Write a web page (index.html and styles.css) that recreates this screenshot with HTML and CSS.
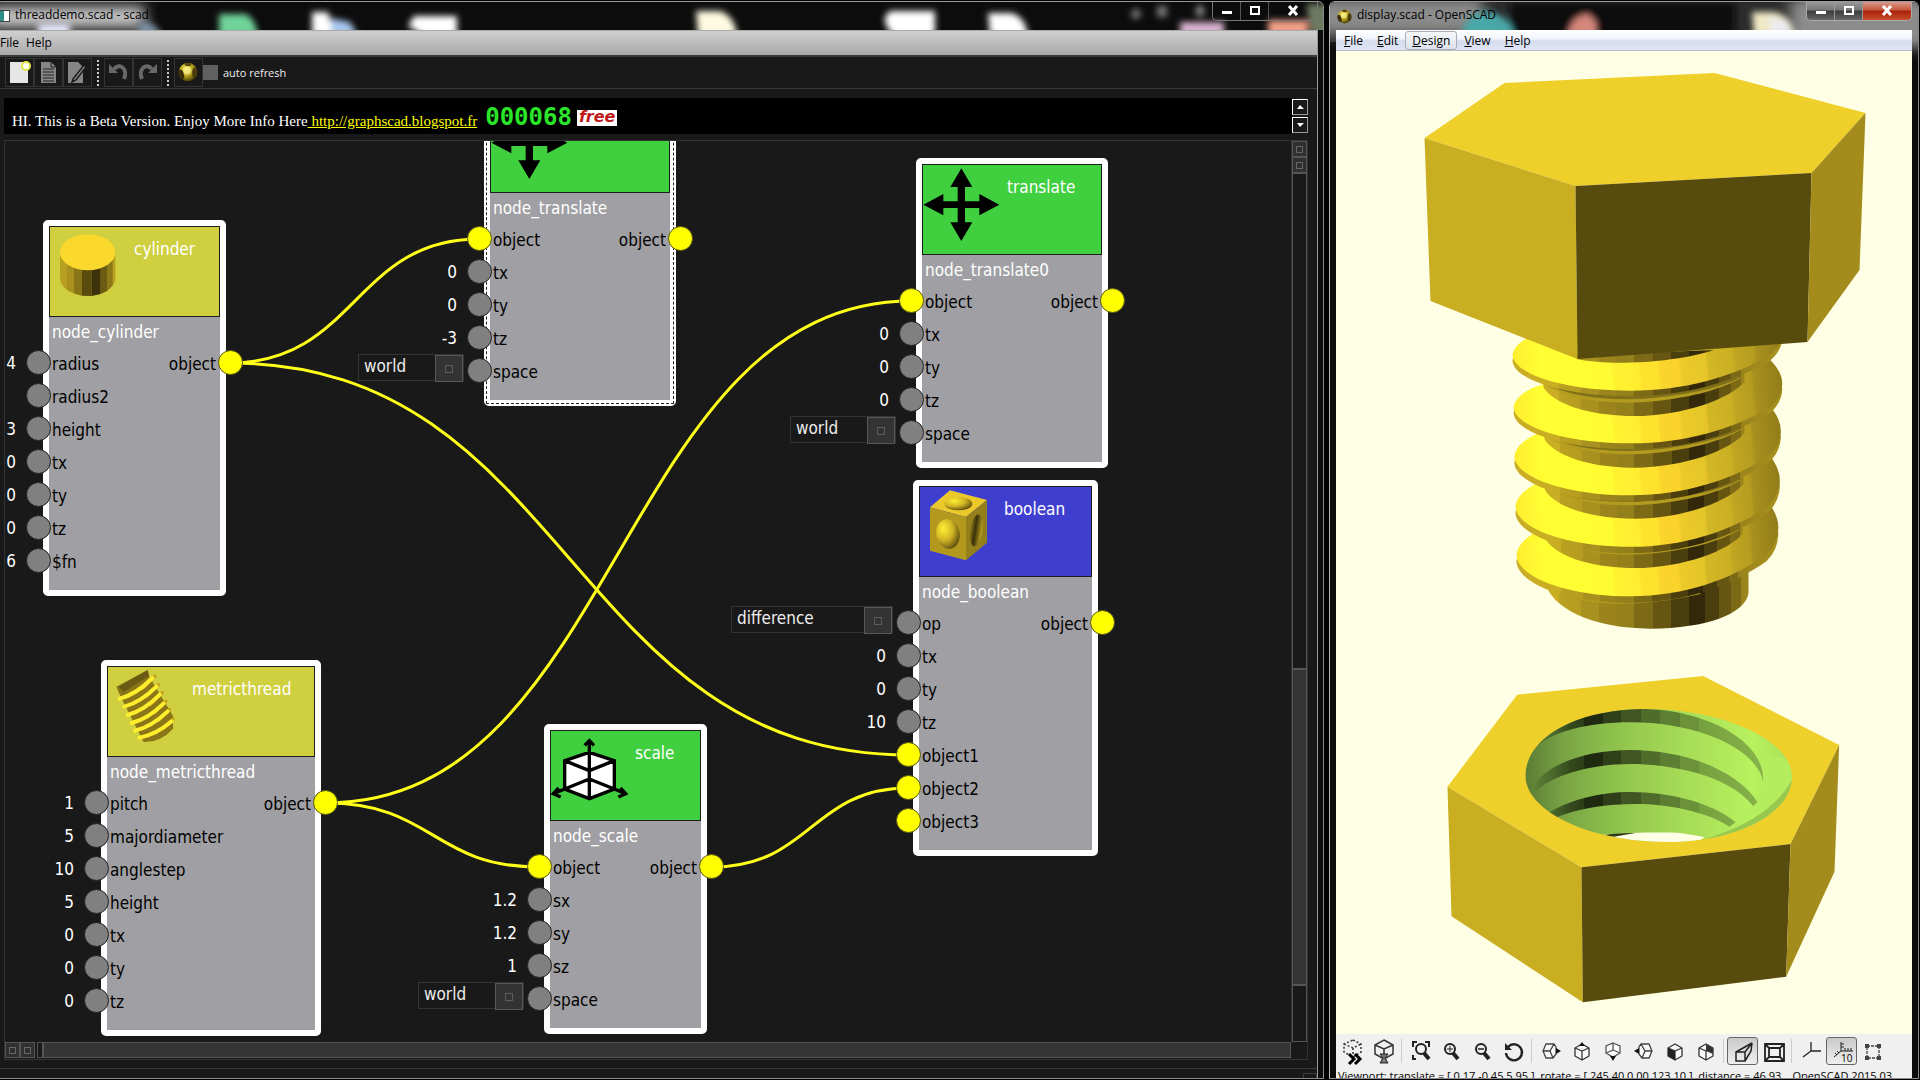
FILE: index.html
```html
<!DOCTYPE html>
<html lang="en">
<head>
<meta charset="utf-8">
<title>threaddemo.scad - scad</title>
<link rel="stylesheet" href="styles.css">
</head>
<body>
<svg class="defs" width="0" height="0" aria-hidden="true">
  <defs>
    <filter id="soft" x="-50%" y="-50%" width="200%" height="200%"><feGaussianBlur stdDeviation="3"/></filter>
    <filter id="glow" x="-50%" y="-100%" width="200%" height="300%"><feGaussianBlur stdDeviation="7"/></filter>
    <radialGradient id="gold" cx=".4" cy=".35" r=".7"><stop offset="0" stop-color="#f4e86a"/><stop offset=".5" stop-color="#b9a51f"/><stop offset="1" stop-color="#3a3206"/></radialGradient>
    <symbol id="logo" viewBox="0 0 24 24">
      <circle cx="12" cy="12" r="11" fill="url(#gold)"/>
      <ellipse cx="4" cy="15" rx="3" ry="6" fill="#3b2f0a" transform="rotate(-15 4 15)"/>
      <ellipse cx="20" cy="13" rx="3" ry="6" fill="#4a3c0c"/>
      <ellipse cx="12" cy="3" rx="4" ry="2" fill="#574710"/>
      <ellipse cx="11" cy="10" rx="5" ry="5" fill="#fff59a" opacity=".6"/>
    </symbol>
    <symbol id="cross-arrows" viewBox="0 0 240 240">
      <path d="M118 13L151 69H129V112H172V90L232 122L172 154V132H129V175H151L118 231L85 175H107V132H64V154L4 122L64 90V112H107V69H85Z" fill="#000"/>
    </symbol>
    <symbol id="cube" viewBox="0 0 28 28">
      <path d="M14 6L21 10V18L14 22L7 18V10ZM7 10L14 13L21 10M14 13V22" fill="#fafafa" stroke="#333" stroke-width="1.3" stroke-linejoin="round"/>
    </symbol>
  </defs>
</svg>

<div class="desktop">
  <section class="window graph" aria-label="threaddemo.scad - scad">
    <header class="titlebar">
      <svg class="glass" aria-hidden="true">
        <g filter="url(#glow)"><rect x="-10" y="4" width="155" height="22" fill="#c9c9c9"/></g>
        <g filter="url(#soft)">
          <path d="M38 22H70V34H38Z" fill="#e8e8ff"/><path d="M140 20Q155 18 162 34H135Z" fill="#7b8fa3"/>
          <path d="M219 12H246Q256 18 258 34H219Z" fill="#6fd39a"/>
          <path d="M312 10H328L334 34H312Z" fill="#fff"/><path d="M330 16L350 20L358 34H332Z" fill="#a9c6ee"/>
          <path d="M414 14H457V34H424L408 24Z" fill="#fff"/>
          <path d="M696 9H720Q735 14 737 34H698Z" fill="#fffbe2"/>
          <path d="M890 9H935V34H894Q878 18 890 9Z" fill="#fff"/>
          <path d="M988 11H1012Q1026 16 1028 34H990Z" fill="#fff"/>
          <circle cx="1136" cy="12" r="5" fill="#777"/><rect x="1157" y="4" width="10" height="11" fill="#777"/><rect x="1196" y="4" width="8" height="10" fill="#888"/>
          <path d="M1180 20H1224V34H1180Z" fill="#d9b3cf"/>
          <path d="M1268 18H1308V34H1268Z" fill="#ef9d86"/>
          <path d="M1306 2H1330V36H1312Z" fill="#6d7a60"/>
        </g>
      </svg>
      <span class="app-mark" aria-hidden="true"></span>
      <h1>threaddemo.scad - scad</h1>
      <div class="caption dark">
        <button class="cap" aria-label="Minimize"><svg viewBox="0 0 12 12"><rect x="1" y="6" width="10" height="3" fill="#fff"/></svg></button>
        <button class="cap" aria-label="Maximize"><svg viewBox="0 0 12 12"><rect x="2" y="2" width="8" height="7" fill="none" stroke="#fff" stroke-width="2"/></svg></button>
        <button class="cap close" aria-label="Close"><svg viewBox="0 0 12 12"><path d="M2 1L10 10M10 1L2 10" stroke="#fff" stroke-width="3"/></svg></button>
      </div>
    </header>

    <div class="graph-body">
      <nav class="menubar silver"><a href="#file">File</a><a href="#help">Help</a></nav>
      <div class="tools">
        <button class="tool" aria-label="New"><svg viewBox="0 0 27 27"><path d="M4 3H18L22 7V24H4Z" fill="#e6e6e6"/><circle cx="20" cy="7" r="4" fill="#fff" stroke="#e6e34a" stroke-width="2"/></svg></button>
        <button class="tool" aria-label="Open"><svg viewBox="0 0 27 27"><path d="M6 3H16L21 8V24H6Z" fill="#858585"/><path d="M8 10H19M8 13H19M8 16H19M8 19H19M8 22H19" stroke="#222" stroke-width="1"/><path d="M16 3V8H21" fill="none" stroke="#222"/></svg></button>
        <button class="tool" aria-label="Save"><svg viewBox="0 0 27 27"><path d="M4 3H14L19 8V24H4Z" fill="#858585"/><path d="M9 20L20 6L22 8L12 21L8 23Z" fill="#858585" stroke="#191919" stroke-width="1.4"/></svg></button>
        <span class="grip"></span>
        <button class="tool" aria-label="Undo"><svg viewBox="0 0 27 27"><path d="M9 10C15 3 23 10 19 20" fill="none" stroke="#686868" stroke-width="4"/><path d="M4 5V14H13Z" fill="#686868"/></svg></button>
        <button class="tool" aria-label="Redo"><svg viewBox="0 0 27 27"><path d="M18 10C12 3 4 10 8 20" fill="none" stroke="#686868" stroke-width="4"/><path d="M23 5V14H14Z" fill="#686868"/></svg></button>
        <span class="grip"></span>
        <button class="tool" aria-label="Render"><svg viewBox="0 0 27 27"><use href="#logo" x="2" y="3" width="22" height="20"/></svg></button>
        <input type="checkbox" id="auto"><label for="auto">auto refresh</label>
      </div>

      <main class="work">
        <div class="banner">
          <p>HI. This is a Beta Version. Enjoy More Info Here<a href="#blog"> http://graphscad.blogspot.fr</a></p>
          <span class="counter">000068</span>
          <span class="free">free</span>
          <div class="spin">
            <button aria-label="Scroll up"><svg viewBox="0 0 12 12"><path d="M3 8H10L6 4Z" fill="#fff"/></svg></button>
            <button aria-label="Scroll down"><svg viewBox="0 0 12 12"><path d="M3 4H10L6 8Z" fill="#fff"/></svg></button>
          </div>
        </div>

        <div class="board">
          <div class="canvas">
            <svg class="wires" aria-hidden="true">
              <path d="M225 222C350 222 350 98 474 98"/>
              <path d="M225 222C565 222 565 614 904 614"/>
              <path d="M321 662C614 662 614 160 907 160"/>
              <path d="M321 662C428 662 428 726 534 726"/>
              <path d="M707 726C806 726 806 647 904 647"/>
            </svg>

            <article class="node at-cylinder yellow">
              <header><svg viewBox="0 0 240 240"><g>
                <path d="M33 79V156A83 54 0 0 0 199 156V79Z" fill="#b89f20"/>
                <path d="M54 79V191L75 202V79Z" fill="#a8911e"/><path d="M75 79V202L99 209V79Z" fill="#877518"/><path d="M99 79V209L128 210V79Z" fill="#594b0e"/><path d="M128 79V210L155 204V79Z" fill="#3d330a"/><path d="M155 79V204L175 194V79Z" fill="#6b5b13"/><path d="M175 79V194L191 178V79Z" fill="#8c7919"/>
                <ellipse cx="116" cy="79" rx="83" ry="54" fill="#fad82c"/></g></svg><h2>cylinder</h2></header>
              <p class="name">node_cylinder</p>
              <ul>
                <li><input value="4" aria-label="radius"><i class="port"></i><span>radius</span><span class="out">object</span><i class="port live end"></i></li>
                <li><i class="port"></i><span>radius2</span></li>
                <li><input value="3" aria-label="height"><i class="port"></i><span>height</span></li>
                <li><input value="0" aria-label="tx"><i class="port"></i><span>tx</span></li>
                <li><input value="0" aria-label="ty"><i class="port"></i><span>ty</span></li>
                <li><input value="0" aria-label="tz"><i class="port"></i><span>tz</span></li>
                <li><input value="6" aria-label="$fn"><i class="port"></i><span>$fn</span></li>
              </ul>
            </article>

            <article class="node at-translate green selected">
              <header><svg viewBox="0 0 240 240"><use href="#cross-arrows"/></svg></header>
              <p class="name">node_translate</p>
              <ul>
                <li><i class="port live"></i><span>object</span><span class="out">object</span><i class="port live end"></i></li>
                <li><input value="0" aria-label="tx"><i class="port"></i><span>tx</span></li>
                <li><input value="0" aria-label="ty"><i class="port"></i><span>ty</span></li>
                <li><input value="-3" aria-label="tz"><i class="port"></i><span>tz</span></li>
                <li><div class="combo"><select aria-label="space"><option>world</option></select></div><i class="port"></i><span>space</span></li>
              </ul>
            </article>

            <article class="node at-translate0 green">
              <header><svg viewBox="0 0 240 240"><use href="#cross-arrows"/></svg><h2>translate</h2></header>
              <p class="name">node_translate0</p>
              <ul>
                <li><i class="port live"></i><span>object</span><span class="out">object</span><i class="port live end"></i></li>
                <li><input value="0" aria-label="tx"><i class="port"></i><span>tx</span></li>
                <li><input value="0" aria-label="ty"><i class="port"></i><span>ty</span></li>
                <li><input value="0" aria-label="tz"><i class="port"></i><span>tz</span></li>
                <li><div class="combo"><select aria-label="space"><option>world</option></select></div><i class="port"></i><span>space</span></li>
              </ul>
            </article>

            <article class="node at-boolean blue">
              <header><svg viewBox="0 0 240 240">
                <defs><radialGradient id="ball" cx=".35" cy=".3" r=".8"><stop offset="0" stop-color="#fff033"/><stop offset=".5" stop-color="#d0b324"/><stop offset="1" stop-color="#4a3e0c"/></radialGradient>
                <linearGradient id="pit"><stop offset="0" stop-color="#8a7618"/><stop offset=".4" stop-color="#3a300a"/><stop offset="1" stop-color="#c0a522"/></linearGradient></defs>
                <path d="M33 64L93 13L204 42L141 93Z" fill="#ecc92a"/><path d="M33 64L141 93V223L33 194Z" fill="#b39a1f"/><path d="M141 93L204 42V170L141 223Z" fill="#93801b"/>
                <ellipse cx="118" cy="53" rx="42" ry="20" fill="url(#ball)"/>
                <ellipse cx="87" cy="144" rx="35" ry="45" fill="url(#ball)" transform="rotate(-10 87 144)"/>
                <ellipse cx="172" cy="133" rx="18" ry="48" fill="url(#pit)" transform="rotate(8 172 133)"/></svg><h2>boolean</h2></header>
              <p class="name">node_boolean</p>
              <ul>
                <li><div class="combo wide"><select aria-label="op"><option>difference</option></select></div><i class="port"></i><span>op</span><span class="out">object</span><i class="port live end"></i></li>
                <li><input value="0" aria-label="tx"><i class="port"></i><span>tx</span></li>
                <li><input value="0" aria-label="ty"><i class="port"></i><span>ty</span></li>
                <li><input value="10" aria-label="tz"><i class="port"></i><span>tz</span></li>
                <li><i class="port live"></i><span>object1</span></li>
                <li><i class="port live"></i><span>object2</span></li>
                <li><i class="port live"></i><span>object3</span></li>
              </ul>
            </article>

            <article class="node at-metric yellow">
              <header><svg viewBox="0 0 240 240">
                <path d="M28 62L122 12L126 30L198 150V188Q160 230 110 228L40 90Z" fill="#8a7618"/>
                <path d="M122 12L126 30L50 78L34 62Z" fill="#6b5a12"/>
                <g fill="none" stroke="#c69f1d" stroke-width="9" stroke-linecap="round"><path d="M106 68L144 30M118 92L155 56M130 116L166 80M142 140L177 106M154 164L188 130M164 188L198 160"/></g>
                <g fill="none" stroke="#ffee2e" stroke-width="12" stroke-linecap="round"><path d="M38 98Q90 84 136 36M52 122Q102 108 148 62M62 147Q114 132 158 86M74 171Q124 158 170 112M84 194Q134 182 182 136M97 215Q148 206 194 166"/></g></svg><h2>metricthread</h2></header>
              <p class="name">node_metricthread</p>
              <ul>
                <li><input value="1" aria-label="pitch"><i class="port"></i><span>pitch</span><span class="out">object</span><i class="port live end"></i></li>
                <li><input value="5" aria-label="majordiameter"><i class="port"></i><span>majordiameter</span></li>
                <li><input value="10" aria-label="anglestep"><i class="port"></i><span>anglestep</span></li>
                <li><input value="5" aria-label="height"><i class="port"></i><span>height</span></li>
                <li><input value="0" aria-label="tx"><i class="port"></i><span>tx</span></li>
                <li><input value="0" aria-label="ty"><i class="port"></i><span>ty</span></li>
                <li><input value="0" aria-label="tz"><i class="port"></i><span>tz</span></li>
              </ul>
            </article>

            <article class="node at-scale green">
              <header><svg viewBox="0 0 240 240"><path d="M118 67L193 92V177L118 206L44 177V92Z" fill="#fff"/>
                <path d="M118 206V34M104 46L118 32L132 46M118 67L193 92V177L118 206L44 177V92ZM44 92L118 122L193 92M44 177L118 147L193 177M44 177L12 190M26 174L10 191L32 201M193 177L225 190M211 174L227 191L205 201" fill="none" stroke="#000" stroke-width="10" stroke-linejoin="miter"/></svg><h2>scale</h2></header>
              <p class="name">node_scale</p>
              <ul>
                <li><i class="port live"></i><span>object</span><span class="out">object</span><i class="port live end"></i></li>
                <li><input value="1.2" aria-label="sx"><i class="port"></i><span>sx</span></li>
                <li><input value="1.2" aria-label="sy"><i class="port"></i><span>sy</span></li>
                <li><input value="1" aria-label="sz"><i class="port"></i><span>sz</span></li>
                <li><div class="combo"><select aria-label="space"><option>world</option></select></div><i class="port"></i><span>space</span></li>
              </ul>
            </article>
          </div>
          <div class="vbar"><button class="nub" aria-label="Scroll up"></button><button class="nub" aria-label="Scroll down"></button><i class="page above"></i><i class="thumb"></i><i class="page below"></i></div>
          <div class="hbar"><button class="nub" aria-label="Scroll left"></button><button class="nub" aria-label="Scroll right"></button><i class="page"></i><i class="thumb"></i></div>
        </div>
      </main>
      <footer class="status-strip"><i></i></footer>
    </div>
  </section>

  <section class="window viewer" aria-label="display.scad - OpenSCAD">
    <header class="titlebar">
      <svg class="glass" aria-hidden="true">
        <rect width="100%" height="40" fill="#2b2b2b"/>
        <g filter="url(#glow)"><rect x="-12" y="-4" width="165" height="36" fill="#8c8c8c"/><rect x="460" y="-4" width="140" height="50" fill="#8c8c8c"/></g>
        <g filter="url(#soft)">
          <rect x="180" y="0" width="225" height="40" fill="#0e0e0e"/>
          <path d="M132 34Q134 12 156 9Q182 14 184 34Z" fill="#4aa7a8"/>
          <path d="M238 34Q240 14 258 12L266 20V34Z" fill="#d5877c"/>
          <path d="M422 10H445Q464 16 464 34H424Z" fill="#efe8c4"/><path d="M440 14L458 20L462 34H440Z" fill="#ececf0"/>
        </g>
      </svg>
      <svg class="app-logo" aria-hidden="true"><use href="#logo"/></svg>
      <h1>display.scad - OpenSCAD</h1>
      <div class="caption">
        <button class="cap" aria-label="Minimize"><svg viewBox="0 0 12 12"><rect x="1" y="6" width="10" height="3" fill="#fff"/></svg></button>
        <button class="cap" aria-label="Maximize"><svg viewBox="0 0 12 12"><rect x="2" y="2" width="8" height="7" fill="none" stroke="#fff" stroke-width="2"/></svg></button>
        <button class="cap close" aria-label="Close"><svg viewBox="0 0 12 12"><path d="M2 1L10 10M10 1L2 10" stroke="#fff" stroke-width="3"/></svg></button>
      </div>
    </header>
    <div class="viewer-body">
      <nav class="menubar blueish"><a href="#vf"><u>F</u>ile</a><a href="#ve"><u>E</u>dit</a><a href="#vd" class="hot"><u>D</u>esign</a><a href="#vv"><u>V</u>iew</a><a href="#vh"><u>H</u>elp</a></nav>
      <svg class="scene" viewBox="1336 51 575 983" role="img" aria-label="Threaded bolt above a hexagonal nut">
        <defs>
          <linearGradient id="steel" gradientUnits="userSpaceOnUse" x1="400" y1="0" x2="1150" y2="0">
            <stop offset=".0" stop-color="#c9ad23"/><stop offset=".1" stop-color="#c9ad23"/><stop offset=".1" stop-color="#bba120"/><stop offset=".19" stop-color="#b59c20"/><stop offset=".19" stop-color="#a8911e"/><stop offset=".26" stop-color="#a8911e"/><stop offset=".26" stop-color="#9a841b"/><stop offset=".33" stop-color="#9a841b"/><stop offset=".33" stop-color="#93801b"/><stop offset=".4" stop-color="#93801b"/><stop offset=".4" stop-color="#7d6a16"/><stop offset=".475" stop-color="#7d6a16"/><stop offset=".475" stop-color="#665612"/><stop offset=".55" stop-color="#665612"/><stop offset=".55" stop-color="#4b3e0d"/><stop offset=".62" stop-color="#4b3e0d"/><stop offset=".62" stop-color="#33290a"/><stop offset=".685" stop-color="#33290a"/><stop offset=".685" stop-color="#4a3e0e"/><stop offset=".74" stop-color="#4a3e0e"/><stop offset=".74" stop-color="#665612"/><stop offset=".79" stop-color="#665612"/><stop offset=".79" stop-color="#7d6a16"/><stop offset=".83" stop-color="#7d6a16"/><stop offset=".83" stop-color="#9a831b"/><stop offset="1" stop-color="#a8921e"/>
          </linearGradient>
          <linearGradient id="cone" gradientUnits="userSpaceOnUse" x1="336" y1="60" x2="1146" y2="-20">
            <stop offset="0" stop-color="#ffee30"/><stop offset=".1" stop-color="#ffff33"/><stop offset=".35" stop-color="#fffb32"/><stop offset=".36" stop-color="#fff231"/><stop offset=".45" stop-color="#ffee30"/><stop offset=".46" stop-color="#ffe22e"/><stop offset=".52" stop-color="#ffe22e"/><stop offset=".53" stop-color="#fad52b"/><stop offset=".6" stop-color="#f9d22b"/><stop offset=".61" stop-color="#ecca29"/><stop offset=".7" stop-color="#e5c528"/><stop offset=".71" stop-color="#d4b725"/><stop offset=".8" stop-color="#cbaf23"/><stop offset=".81" stop-color="#c1a622"/><stop offset=".88" stop-color="#b59c20"/><stop offset=".89" stop-color="#a8911e"/><stop offset="1" stop-color="#8f7b19"/>
          </linearGradient>
          <path id="turn" d="M336 105C338 80 370 52 420 38L1110 -36Q1146 0 1146 35Q1144 75 1110 104C1000 170 850 212 690 212C500 212 340 165 336 105Z"/>
          <g id="core">
            <path d="M424 170L430 204C470 262 590 288 700 288C850 288 990 235 1032 185V120Z" fill="url(#steel)"/>
            <path d="M436 196C520 245 650 255 760 244C880 232 970 205 1025 172Z" fill="#b39b20"/>
            <path d="M436 190C520 238 650 243 760 234C880 222 970 200 1020 172Z" fill="#80701a"/>
          </g>
          <g id="ring">
            <use href="#turn" y="17" fill="url(#steel)"/>
            <use href="#turn" fill="url(#cone)"/>
          </g>
          <linearGradient id="bore" gradientUnits="userSpaceOnUse" x1="375" y1="0" x2="1174" y2="0">
            <stop offset="0" stop-color="#5c7c35"/><stop offset=".1" stop-color="#6f9740"/><stop offset=".15" stop-color="#7aa544"/><stop offset=".3" stop-color="#8abd4a"/><stop offset=".42" stop-color="#98cb4f"/><stop offset=".55" stop-color="#a3d855"/><stop offset=".7" stop-color="#aee45a"/><stop offset=".85" stop-color="#b8f25f"/><stop offset="1" stop-color="#a9df58"/>
          </linearGradient>
          <linearGradient id="groove" gradientUnits="userSpaceOnUse" x1="400" y1="0" x2="1090" y2="0">
            <stop offset="0" stop-color="#5c8036"/><stop offset=".08" stop-color="#4b6a2c"/><stop offset=".16" stop-color="#35491e"/><stop offset=".22" stop-color="#2c3d18"/><stop offset=".22" stop-color="#1f2a10"/><stop offset=".3" stop-color="#1f2a10"/><stop offset=".3" stop-color="#2f3f19"/><stop offset=".38" stop-color="#2f3f19"/><stop offset=".38" stop-color="#415522"/><stop offset=".465" stop-color="#415522"/><stop offset=".465" stop-color="#4f6c2a"/><stop offset=".55" stop-color="#4f6c2a"/><stop offset=".55" stop-color="#5d7f33"/><stop offset=".635" stop-color="#5d7f33"/><stop offset=".635" stop-color="#6b9139"/><stop offset=".72" stop-color="#6b9139"/><stop offset=".72" stop-color="#75a03f"/><stop offset="1" stop-color="#89b34a"/>
          </linearGradient>
          <clipPath id="hole"><path d="M375 345C378 225 540 147 735 147C970 147 1174 240 1174 350C1174 460 1010 546 800 546C560 546 372 450 375 345Z"/></clipPath>
        </defs>
        <g transform="translate(1400 320) scale(.33333)">
          <path d="M436 790C450 860 570 926 750 926C920 926 1035 880 1044 820V700H436Z" fill="url(#steel)"/>
          <path d="M470 816C560 862 720 862 900 822L880 800H500Z" fill="#b39b20"/>
          <use href="#ring" transform="translate(22 583) scale(.97 1.16)"/>
          <use href="#core" transform="translate(16 456) scale(.979 1)"/>
          <use href="#ring" transform="translate(16 441) scale(.979 1.13)"/>
          <use href="#core" transform="translate(10 308) scale(.987 1)"/>
          <use href="#ring" transform="translate(10 295) scale(.987 1.09)"/>
          <use href="#core" transform="translate(5 155) scale(.995 1)"/>
          <use href="#ring" transform="translate(5 156) scale(.995 1.01)"/>
          <use href="#core"/>
          <use href="#ring"/>
          <path d="M530 100L690 100L940 90C840 125 640 140 530 118Z" fill="url(#steel)"/>
        </g>
        <path d="M1504 83L1714 73L1865 113L1811 173L1575 186L1424 138Z" fill="#efcf2a"/>
        <path d="M1424 138L1575 186L1577 359L1430 301Z" fill="#c9ae22"/>
        <path d="M1575 186L1811 173L1807 342L1577 359Z" fill="#584b0e"/>
        <path d="M1811 173L1865 113L1859 270L1807 342Z" fill="#a38c1c"/>
        <g transform="translate(1400 660) scale(.33333)">
          <path d="M350 104L908 48L1316 255L1170 552L543 622L141 380Z" fill="#efcf2a"/>
          <path d="M141 380L543 622L547 1027L153 769Z" fill="#c9ae22"/>
          <path d="M543 622L1170 552L1157 950L547 1027Z" fill="#584b0e"/>
          <path d="M1170 552L1316 255L1302 635L1157 950Z" fill="#a38c1c"/>
          <g clip-path="url(#hole)">
            <rect x="370" y="140" width="810" height="410" fill="url(#bore)"/>
            <path d="M1088 365Q1090 320 1050 270L1174 300V400L905 540L1005 487Q1080 430 1088 365Z" fill="#b4ee5e"/>
            <path d="M905 540Q1110 480 1174 360V420L1000 560Z" fill="#98c850"/>
            <path d="M395 270C480 180 600 140 735 147C900 150 1095 235 1088 365C1070 270 900 187 690 187C560 187 450 215 395 270Z" fill="url(#groove)"/>
            <path d="M403 372C450 305 570 270 690 270C850 270 1010 330 1071 426L1058 438C980 340 800 312 690 312C560 312 450 350 405 395Z" fill="url(#groove)"/>
            <path d="M440 462C500 420 600 396 690 396C810 396 940 430 1005 487L987 500C920 455 800 432 710 432C620 432 530 445 468 472Z" fill="url(#groove)"/>
            <path d="M610 524C680 518 750 517 830 518Q880 524 912 532L870 560H760Z" fill="#ffffe5"/>
            <path d="M608 526Q650 518 705 519L640 530Z" fill="#2b3a14"/>
          </g>
        </g>
      </svg>
      <div class="view-tools">
        <button aria-label="Preview"><svg viewBox="0 0 28 28"><path d="M14 2L22 6V14L14 19L5 14V6ZM5 6L14 10L22 6M14 10V18" fill="none" stroke="#333" stroke-width="1.5" stroke-dasharray="2 2"/><path d="M10 16L15 21L10 26M16 16L21 21L16 26" fill="none" stroke="#000" stroke-width="3"/></svg></button>
        <button aria-label="Render"><svg viewBox="0 0 28 28"><path d="M14 2L23 7V16L14 21L5 16V7ZM5 7L14 11L23 7M14 11V20" fill="none" stroke="#333" stroke-width="1.5"/><path d="M10 16H18L15 20L18 25H10L13 20Z" fill="#777" stroke="#222"/></svg></button>
        <i class="rule"></i>
        <button aria-label="View all"><svg viewBox="0 0 28 28"><path d="M6 9V4H10M18 4H22V9M6 17V21H9" fill="none" stroke="#222" stroke-width="2"/><circle cx="14" cy="11" r="5" fill="none" stroke="#222" stroke-width="2"/><path d="M17 15L22 21" stroke="#222" stroke-width="4"/></svg></button>
        <button aria-label="Zoom in"><svg viewBox="0 0 28 28"><circle cx="12" cy="11" r="5" fill="none" stroke="#222" stroke-width="2"/><path d="M15 15L20 21" stroke="#222" stroke-width="4"/><path d="M12 8V14M9 11H15" stroke="#222"/></svg></button>
        <button aria-label="Zoom out"><svg viewBox="0 0 28 28"><circle cx="12" cy="11" r="5" fill="none" stroke="#222" stroke-width="2"/><path d="M15 15L20 21" stroke="#222" stroke-width="4"/><path d="M9 11H15" stroke="#222" stroke-width="1.5"/></svg></button>
        <button aria-label="Reset view"><svg viewBox="0 0 28 28"><path d="M8 9A8 8 0 1 1 6 15" fill="none" stroke="#222" stroke-width="2.4"/><path d="M5 5V12H12Z" fill="#222"/></svg></button>
        <i class="rule"></i>
        <button aria-label="Right"><svg viewBox="0 0 28 28"><path d="M6 13L9 6H17L19 9V16L16 20H9ZM6 13H13L17 6M13 13L16 20" fill="#fafafa" stroke="#444" stroke-width="1.3"/><path d="M19 10L24 13L19 16Z" fill="#111"/></svg></button>
        <button aria-label="Top"><svg viewBox="0 0 28 28"><use href="#cube"/><path d="M11 8L14 4L17 8Z" fill="#111"/></svg></button>
        <button aria-label="Bottom"><svg viewBox="0 0 28 28"><path d="M14 5L21 8V15L14 19L7 15V8ZM14 5V12L7 15M14 12L21 15" fill="#fafafa" stroke="#555" stroke-width="1.3"/><path d="M11 18H17L14 23Z" fill="#111"/></svg></button>
        <button aria-label="Left"><svg viewBox="0 0 28 28"><path d="M22 13L19 6H11L9 9V16L12 20H19ZM22 13H15L11 6M15 13L12 20" fill="#fafafa" stroke="#444" stroke-width="1.3"/><path d="M9 10L4 13L9 16Z" fill="#111"/></svg></button>
        <button aria-label="Front"><svg viewBox="0 0 28 28"><use href="#cube"/><path d="M7 10L14 13V22L7 18Z" fill="#222"/></svg></button>
        <button aria-label="Back"><svg viewBox="0 0 28 28"><use href="#cube"/><path d="M14 6L21 10V16L14 13Z" fill="#333"/></svg></button>
        <i class="rule"></i>
        <button aria-label="Perspective" class="on"><svg viewBox="0 0 28 28"><path d="M7 14H16V23H7ZM7 14L23 5L16 14M16 23L22 13L23 5" fill="none" stroke="#222" stroke-width="1.5"/></svg></button>
        <button aria-label="Orthogonal"><svg viewBox="0 0 28 28"><path d="M5 6H24V23H5ZM9 10H20V19H9ZM5 6L9 10M24 6L20 10M5 23L9 19M24 23L20 19" fill="none" stroke="#222" stroke-width="1.8"/></svg></button>
        <i class="rule"></i>
        <button aria-label="Show axes"><svg viewBox="0 0 28 28"><path d="M14 4V13H24M14 13L6 19" fill="none" stroke="#222" stroke-width="1.3"/></svg></button>
        <button aria-label="Show scale markers" class="on"><svg viewBox="0 0 28 28"><path d="M13 4V13H25M13 13L6 19M13 6H16M13 9H16M17 13V10M20 13V10M23 13V10M9 13L11 15M7 15L9 17" fill="none" stroke="#222"/><text x="13" y="24" font-size="10">10</text></svg></button>
        <button aria-label="Show edges"><svg viewBox="0 0 28 28"><path d="M8 8H20V20H8Z" fill="none" stroke="#444" stroke-width="1.3" stroke-dasharray="3 1"/><path d="M6 6H10V10H6ZM18 6H22V10H18ZM6 18H10V22H6ZM18 18H22V22H18Z" fill="#444"/></svg></button>
      </div>
      <footer class="readout"><span>Viewport: translate = [ 0.17 -0.45 5.95 ], rotate = [ 245.40 0.00 123.10 ], distance = 46.93</span><span>OpenSCAD 2015.03</span></footer>
    </div>
  </section>
</div>
</body>
</html>
```
FILE: styles.css
```css
* { box-sizing: border-box; }
html, body { height: 100%; }
body {
  margin: 0;
  background: #000;
  font-family: "Open Sans", "Noto Sans", sans-serif;
  font-size: 12px;
  overflow: hidden;
}
h1, h2, p, ul { margin: 0; padding: 0; font-weight: normal; }
ul { list-style: none; }
button { margin: 0; padding: 0; border: 0; background: none; font: inherit; display: block; }
svg { display: block; }
.defs { position: absolute; }

.desktop {
  display: grid;
  grid-template-columns: 1324fr 590fr;
  column-gap: 5px;
  height: 100vh;
  padding: 1px 1px 1px 0;
}
.window {
  display: flex;
  flex-direction: column;
  min-width: 0;
  min-height: 0;
  position: relative;
  border-top: 1px solid #9b9b9b;
  border-bottom: 1px solid #8a8a8a;
  background: #0c0c0c;
  overflow: hidden;
}
.graph { border-right: 1px solid #8a8a8a; border-radius: 0 6px 0 0; padding-right: 5px; }
.viewer { border-left: 1px solid #b5b5b5; border-right: 1px solid #8a8a8a; border-radius: 6px 6px 0 0; padding: 0 6px; }

/* Title bars */
.titlebar { display: flex; align-items: center; height: 28px; flex: none; }
.titlebar h1 { flex: 1; font-size: 12px; line-height: 16px; padding-bottom: 2px; color: #000; position: relative; }
.graph .titlebar h1 { padding-left: 5px; }
.viewer .titlebar h1 { padding-left: 5px; }
.glass { position: absolute; left: 0; top: 0; width: 100%; height: 28px; }
.viewer .glass { height: 100%; }
.app-mark { position: relative; width: 10px; height: 12px; border: 1px solid #444; border-left: 0; background: linear-gradient(90deg, #2f8f88 50%, #fff 50%); }
.app-logo { position: relative; width: 15px; height: 15px; margin-left: 1px; }
.caption { position: relative; align-self: flex-start; display: flex; height: 19px; border: 1px solid #aaa; border-top: 0; border-radius: 0 0 5px 5px; overflow: hidden; }
.cap { width: 28px; display: grid; place-items: center; border-right: 1px solid #999; background: linear-gradient(#999, #777 45%, #3c3c3c 50%, #666); }
.cap.close { width: 48px; border-right: 0; background: linear-gradient(#d99a8a, #c4563e 45%, #a92008 50%, #c94e2c); }
.caption.dark { border-color: #777; }
.caption.dark .cap { background: none; border-color: #555; }
.cap svg { width: 12px; height: 12px; }

/* Graph editor window */
.graph-body {
  flex: 1;
  min-height: 0;
  display: flex;
  flex-direction: column;
  border-top: 1px solid #aaa;
  border-right: 1px solid #999;
  background: #191919;
}
.menubar { display: flex; flex: none; color: #000; }
.menubar a { color: inherit; text-decoration: none; }
.silver { height: 26px; line-height: 24px; gap: 7px; background: linear-gradient(#cfcfcf, #a9a9a9); border-bottom: 2px solid #3a3a3a; }
.tools { display: flex; align-items: center; height: 32px; flex: none; padding-left: 5px; border-bottom: 1px solid #3a3a3a; color: #eee; }
.tool { width: 29px; height: 29px; border: 1px solid #333; }
.tool svg { width: 27px; height: 27px; }
.grip { width: 4px; height: 26px; margin: 0 4px; background: repeating-linear-gradient(#ccc 0 2px, transparent 2px 4px) center / 2px 100% no-repeat; }
.tools input { appearance: none; width: 15px; height: 15px; margin: 0 5px 0 0; background: #606060; }
.tools label { font-size: 11px; }

.work { flex: 1; min-height: 0; display: flex; flex-direction: column; gap: 6px; padding: 9px 9px 8px 4px; }
.banner { display: flex; align-items: flex-end; flex: none; height: 36px; padding-left: 8px; background: #000; color: #fff; }
.banner p { font: 15px/18px "Liberation Serif", "Times New Roman", serif; padding-bottom: 4px; white-space: pre; }
.banner a { color: #ff0; }
.counter { font: bold 24px/26px "DejaVu Sans Mono", monospace; color: #2be52b; margin: 0 5px 0 8px; padding-bottom: 4px; }
.free { background: #fff; color: #c01818; font: italic bold 16px/14px "DejaVu Sans", sans-serif; padding: 0 2px 2px; margin-bottom: 8px; }
.spin { margin-left: auto; align-self: stretch; width: 16px; display: flex; flex-direction: column; justify-content: space-between; padding: 1px 0; background: #191919; }
.spin button { width: 16px; height: 16px; border: 1px solid #fff; border-right-color: #999; border-bottom-color: #999; display: grid; place-items: center; }
.spin svg { width: 12px; height: 12px; }

.board { flex: 1; min-height: 0; display: grid; grid-template: 1fr 17px / 1fr 16px; border: 1px solid #333; }
.canvas { position: relative; overflow: hidden; min-height: 0; }
.vbar { display: flex; flex-direction: column; align-items: center; background: #333; min-height: 0; }
.hbar { display: flex; background: #191919; }
.nub { width: 15px; height: 16px; border: 1px solid #555; background: #303030; display: grid; place-items: center; flex: none; }
.nub::before { content: ""; width: 5px; height: 5px; border: 1px solid #666; }
.page { background: #191919; border: 1px solid #555; width: 15px; }
.above { flex: 497; }
.vbar .thumb { flex: 317; }
.below { flex: 55; }
.thumb { background: #353535; border: 1px solid #555; width: 15px; }
.hbar .page { width: 6px; margin-left: 2px; }
.hbar .thumb { flex: 1; }
.hbar .nub, .hbar .page, .hbar .thumb { height: 16px; }
.status-strip { height: 10px; flex: none; border-top: 1px solid #3a3a3a; display: flex; justify-content: flex-end; align-items: flex-end; }
.status-strip i { width: 14px; height: 5px; border: 1px solid #3a3a3a; border-bottom: 0; }

/* Nodes on the free canvas */
.wires { position: absolute; inset: 0; width: 100%; height: 100%; fill: none; stroke: #ffff19; stroke-width: 3; }
.node {
  position: absolute;
  border: 6px solid #fff;
  border-radius: 5px;
  background: #a0a0a4;
  padding-bottom: 12px;
  font: 17px/33px "DejaVu Sans Condensed", "DejaVu Sans", sans-serif;
  color: #000;
}
.node header { display: flex; height: 91px; border: 1px solid #1d1d1d; }
.node header svg { width: 80px; height: 80px; margin: -1px 0 0 -1px; flex: none; }
.node h2 { font-size: 17px; line-height: 20px; color: #fff; padding: 12px 0 0 5px; }
.yellow header { background: #cfcf3f; }
.green header { background: #3fcf3f; }
.blue header { background: #3f3fcf; }
.name { height: 30px; line-height: 30px; padding-left: 3px; color: #fff; }
.node li { position: relative; display: flex; justify-content: space-between; height: 33px; line-height: 34px; padding: 0 4px 0 3px; }
.port { position: absolute; left: -23px; top: 3px; width: 25px; height: 25px; border: 1px solid #222; border-radius: 50%; background: #808080; }
.port.live { background: #ff0; border-color: #55551a; }
.port.end { left: auto; right: -23px; }
.node input {
  position: absolute; right: 100%; top: 0; width: 40px; height: 33px; margin-right: 33px; padding: 0;
  border: 0; background: none; color: #fff; font: inherit; line-height: 33px; text-align: right;
}
.combo { position: absolute; right: 100%; top: -1px; width: 106px; height: 27px; margin-right: 26px; border: 1px solid #333; background: #191919; }
.combo.wide { width: 162px; }
.combo select { display: block; appearance: none; width: 100%; height: 23px; padding: 0 28px 0 5px; border: 0; background: none; color: #eee; font: inherit; line-height: 23px; }
.combo::after { content: ""; position: absolute; right: 0; top: 0; width: 26px; height: 25px; border: 1px solid #585858; background: linear-gradient(#333, #333) center / 6px 6px no-repeat, linear-gradient(#5c5c5c, #5c5c5c) center / 8px 8px no-repeat, #333; pointer-events: none; }
.selected::before { content: ""; position: absolute; inset: -4px; border: 1px dashed #222; border-top: 0; }

.at-cylinder { left: 38px; top: 79px; width: 183px; }
.at-translate { left: 479px; top: -45px; width: 192px; }
.at-translate0 { left: 911px; top: 17px; width: 192px; }
.at-boolean { left: 908px; top: 339px; width: 185px; }
.at-metric { left: 96px; top: 519px; width: 220px; }
.at-scale { left: 539px; top: 583px; width: 163px; }

/* Viewer window */
.viewer-body { position: relative; flex: 1; min-height: 0; display: flex; flex-direction: column; background: #f0f0f0; overflow: hidden; }
.blueish { height: 21px; align-items: center; padding-left: 1px; background: linear-gradient(#fff, #f0f3fa 45%, #d5dcee 55%, #dfe5f4); border-bottom: 1px solid #b6bccc; }
.blueish a { padding: 0 6px; border: 1px solid transparent; line-height: 17px; }
.blueish .hot { border-color: #a9adb8; border-radius: 3px; background: linear-gradient(#f6f7fa, #dde1ec); }
.scene { flex: 1; min-height: 0; width: 100%; background: #ffffe5; }
.view-tools { display: flex; align-items: center; height: 34px; flex: none; padding-left: 1px; }
.view-tools button { width: 31px; height: 28px; display: grid; place-items: center; border: 1px solid transparent; border-radius: 3px; }
.view-tools button.on { border-color: #666; background: linear-gradient(#c9c9c9, #efefef); }
.view-tools svg { width: 28px; height: 28px; font-family: "Open Sans", sans-serif; }
.rule { width: 1px; height: 24px; margin: 0 3px 0 2px; background: #ccc; }
.readout { flex: none; height: 10px; line-height: 16px; padding: 0 20px 0 2px; display: flex; justify-content: space-between; white-space: pre; color: #000; font-size: 11px; }
```
